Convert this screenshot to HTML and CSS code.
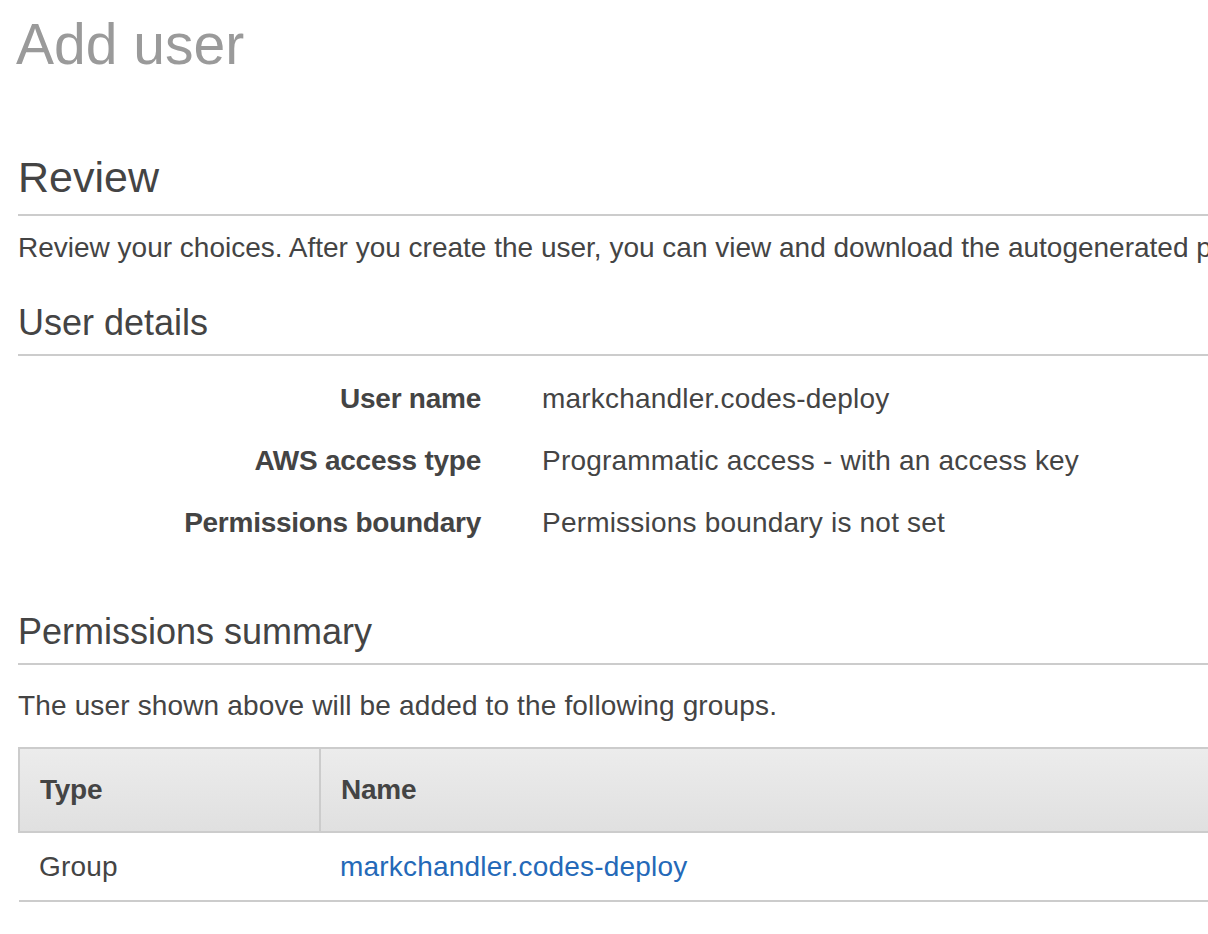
FILE: index.html
```html
<!DOCTYPE html>
<html lang="en">
<head>
<meta charset="utf-8">
<title>Add user</title>
<link rel="stylesheet" href="styles.css">
</head>
<body>
<main class="page">
  <h1 class="page-title">Add user</h1>

  <h2 class="step-title">Review</h2>
  <p class="intro">Review your choices. After you create the user, you can view and download the autogenerated password and access key.</p>

  <section class="section">
    <h3 class="section-title">User details</h3>
    <dl class="details">
      <dt>User name</dt>
      <dd>markchandler.codes-deploy</dd>
      <dt>AWS access type</dt>
      <dd>Programmatic access - with an access key</dd>
      <dt>Permissions boundary</dt>
      <dd>Permissions boundary is not set</dd>
    </dl>
  </section>

  <section class="section">
    <h3 class="section-title">Permissions summary</h3>
    <p class="summary-text">The user shown above will be added to the following groups.</p>
    <table class="groups">
      <thead>
        <tr><th class="col-type">Type</th><th>Name</th></tr>
      </thead>
      <tbody>
        <tr><td>Group</td><td><a href="#" class="link">markchandler.codes-deploy</a></td></tr>
      </tbody>
    </table>
  </section>
</main>
</body>
</html>
```

FILE: styles.css
```css
html, body {
  margin: 0;
  padding: 0;
  overflow: hidden;
  background: #ffffff;
}

body {
  font-family: "Liberation Sans", Arial, Helvetica, sans-serif;
  color: #444444;
  width: 1208px;
  height: 934px;
}

.page {
  width: 1700px;
  padding-left: 18px;
  letter-spacing: 0.2px;
}

.page-title {
  margin: 0 0 0 -2px;
  padding-top: 10px;
  font-size: 57px;
  font-weight: 400;
  line-height: 68px;
  color: #9a9a9a;
  letter-spacing: 0;
}

.step-title {
  margin: 74px 0 0 0;
  font-size: 43px;
  font-weight: 400;
  line-height: 50px;
  color: #444444;
  padding-bottom: 12px;
  border-bottom: 2px solid #cccccc;
  letter-spacing: 0;
}

.intro {
  margin: 14px 0 0 0;
  font-size: 28px;
  line-height: 36px;
  white-space: nowrap;
  letter-spacing: 0;
}

.section-title {
  margin: 0;
  font-size: 36px;
  font-weight: 400;
  line-height: 44px;
  padding-bottom: 9px;
  border-bottom: 2px solid #cccccc;
  letter-spacing: 0;
}

.section {
  margin-top: 35px;
}

.details {
  display: grid;
  grid-template-columns: 463px 1fr;
  column-gap: 61px;
  row-gap: 26px;
  margin: 25px 0 0 0;
  font-size: 28px;
  line-height: 36px;
}

.details dt {
  font-weight: 700;
  text-align: right;
  letter-spacing: -0.25px;
}

.details dd {
  margin: 0;
}

.section + .section {
  margin-top: 69px;
}

.summary-text {
  margin: 23px 0 0 0;
  font-size: 28px;
  line-height: 36px;
  letter-spacing: 0.15px;
}

.groups {
  margin-top: 23px;
  width: 1600px;
  border-collapse: collapse;
  font-size: 28px;
  line-height: 36px;
}

.groups th {
  text-align: left;
  font-weight: 700;
  height: 82px;
  padding: 0 20px;
  background: linear-gradient(#ececec, #e0e0e0);
  border: 2px solid #cccccc;
  border-right: 0;
  letter-spacing: -0.25px;
}

.groups th.col-type {
  width: 259px;
  border-right: 2px solid #cccccc;
}

.groups td {
  height: 67px;
  padding: 0 20px;
  border-bottom: 2px solid #cccccc;
}

.link {
  color: #2469b8;
  text-decoration: none;
}
```
